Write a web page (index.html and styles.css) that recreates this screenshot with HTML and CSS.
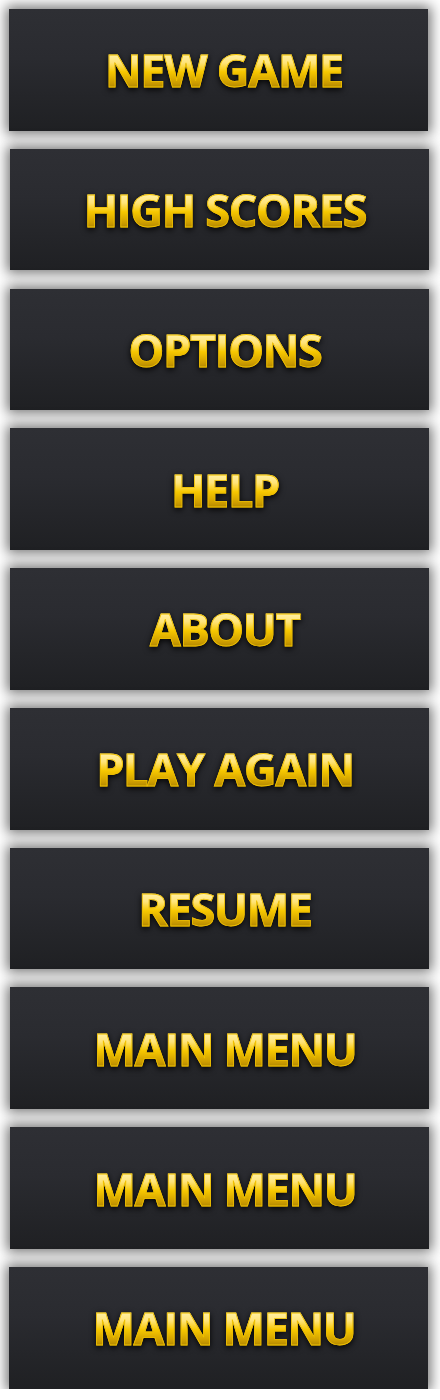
FILE: index.html
```html
<!DOCTYPE html>
<html>
<head>
<meta charset="utf-8">
<link rel="stylesheet" href="styles.css">
</head>
<body>
<div class="menu">
  <div class="btn edge"><span class="label">NEW GAME</span></div>
  <div class="btn"><span class="label">HIGH SCORES</span></div>
  <div class="btn"><span class="label">OPTIONS</span></div>
  <div class="btn"><span class="label">HELP</span></div>
  <div class="btn"><span class="label">ABOUT</span></div>
  <div class="btn"><span class="label">PLAY AGAIN</span></div>
  <div class="btn"><span class="label">RESUME</span></div>
  <div class="btn"><span class="label">MAIN MENU</span></div>
  <div class="btn"><span class="label">MAIN MENU</span></div>
  <div class="btn edge"><span class="label">MAIN MENU</span></div>
</div>
</body>
</html>
```

FILE: styles.css
```css
html, body {
  margin: 0;
  padding: 0;
  background: #ffffff;
}
.menu {
  display: flex;
  flex-direction: column;
  gap: 18.1px;
  padding-top: 9px;
  width: 440px;
}
.btn {
  box-sizing: border-box;
  width: 419px;
  height: 121.7px;
  margin-left: 10px;
  background: linear-gradient(to bottom, #2e2f34 0%, #2a2b30 40%, #1f2023 100%);
  box-shadow: 0 0 12px 3px rgba(0, 0, 0, 0.55);
  display: flex;
  align-items: center;
  justify-content: center;
  padding-left: 11px;
}
.btn.edge {
  margin-left: 9px;
}
.label {
  font-family: "Open Sans", "Liberation Sans", sans-serif;
  font-weight: 700;
  font-size: 45px;
  letter-spacing: -1.3px;
  line-height: 1;
  background: linear-gradient(to bottom, #fff3b0 12%, #ffe47a 35%, #f7c800 55%, #cc9c00 80%, #a27c00 95%);
  -webkit-background-clip: text;
  background-clip: text;
  color: transparent;
  -webkit-text-stroke: 0.8px #f0c000;
  filter: drop-shadow(0 2px 3px rgba(0, 0, 0, 0.9));
}
```
